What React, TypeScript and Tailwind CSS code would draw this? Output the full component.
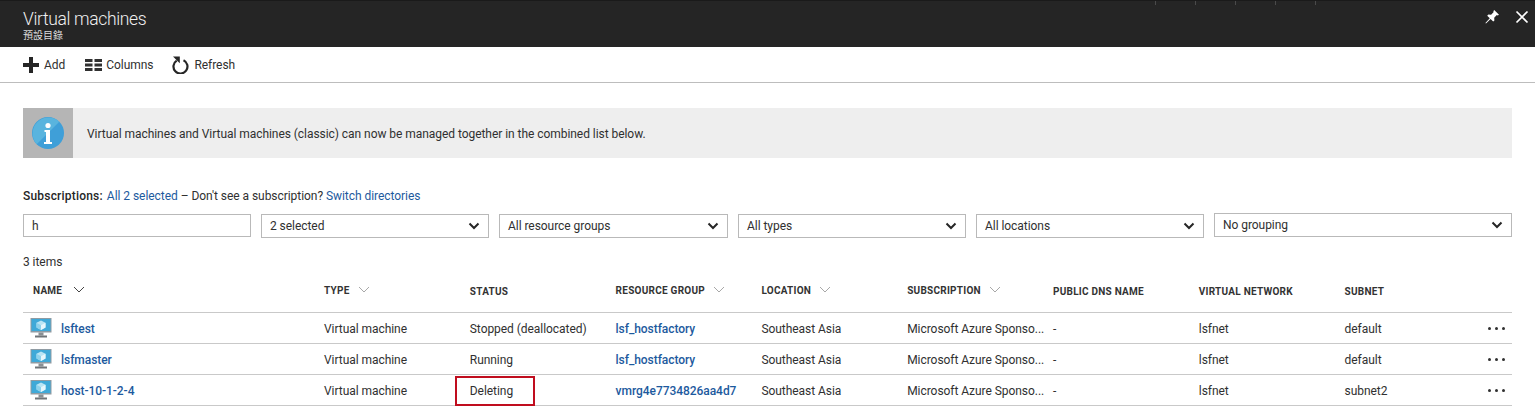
import React from 'react'

const GRID = 'grid grid-cols-[291px_repeat(7,145.8px)_1fr]'

type Vm = {
  name: string
  status: string
  group: string
  subnet: string
  marked?: boolean
}

const vms: Vm[] = [
  { name: 'lsftest', status: 'Stopped (deallocated)', group: 'lsf_hostfactory', subnet: 'default' },
  { name: 'lsfmaster', status: 'Running', group: 'lsf_hostfactory', subnet: 'default' },
  { name: 'host-10-1-2-4', status: 'Deleting', group: 'vmrg4e7734826aa4d7', subnet: 'subnet2', marked: true },
]

const columns: { label: string; sort?: 'dark' | 'light'; lower?: boolean }[] = [
  { label: 'NAME', sort: 'dark' },
  { label: 'TYPE', sort: 'light' },
  { label: 'STATUS', lower: true },
  { label: 'RESOURCE GROUP', sort: 'light' },
  { label: 'LOCATION', sort: 'light' },
  { label: 'SUBSCRIPTION', sort: 'light' },
  { label: 'PUBLIC DNS NAME', lower: true },
  { label: 'VIRTUAL NETWORK', lower: true },
  { label: 'SUBNET', lower: true },
]

function VmIcon() {
  return (
    <svg width="22" height="20" viewBox="0 0 22 20" className="-mt-[2px] shrink-0">
      <rect x="0.5" y="0" width="21" height="14.5" fill="#8f9ba3" />
      <rect x="1.5" y="1" width="19" height="12" fill="#3fa9d8" />
      <path d="M11 2.5l4.5 2.2v4.8L11 12 6.5 9.5V4.7z" fill="#b9e4f4" />
      <path d="M11 7.2l4.5-2.5v4.8L11 12z" fill="#e6f6fc" />
      <path d="M6.5 4.7L11 7.2V12L6.5 9.5z" fill="#8ed2ec" />
      <rect x="8.5" y="14.5" width="5" height="3" fill="#8a8f93" />
      <rect x="5" y="17.5" width="12" height="2" fill="#6f7478" />
    </svg>
  )
}

function Select({ label, className }: { label: string; className: string }) {
  return (
    <div className={`flex h-[24px] items-center justify-between border border-[#b9b9b9] pl-[8px] pr-[8px] ${className}`}>
      <span>{label}</span>
      <svg width="12" height="8" viewBox="0 0 12 8">
        <path d="M1.5 1.5L6 6l4.5-4.5" fill="none" stroke="#262626" strokeWidth="2" />
      </svg>
    </div>
  )
}

function SortCaret({ tone }: { tone: 'dark' | 'light' }) {
  return (
    <svg
      width="12"
      height="7"
      viewBox="0 0 12 7"
      className={`mb-[3px] inline-block ${tone === 'dark' ? 'ml-[11px]' : 'ml-[8px]'}`}
    >
      <path d="M1 1l5 5 5-5" fill="none" stroke={tone === 'dark' ? '#444444' : '#a8a8a8'} strokeWidth="1" />
    </svg>
  )
}

export default function App() {
  return (
    <div className="relative h-[417px] w-[1535px] overflow-hidden bg-white font-['Roboto','Noto_Sans_CJK_TC',sans-serif] text-[12px] leading-none tracking-[-0.05px] text-[#303030]">
      {/* blade header */}
      <div className="relative flex h-[47px] items-start justify-between border-t border-[#1a1a1a] bg-[#252525] pl-[23px] pr-[6px] text-white">
        <div>
          <div className="mt-[8px] text-[17.5px] leading-[20px] font-light tracking-[-0.35px] text-[#f0f0f0]">Virtual machines</div>
          <div className="mt-[1px] text-[10px] leading-[11px] tracking-normal text-[#dddddd]">預設目錄</div>
        </div>
        <div className="mt-[8px] flex items-center gap-[15px]">
          <svg width="16" height="16" viewBox="0 0 16 16">
            <path d="M10.2 1l4.8 4.8-1.3.7-.9-.4-2.6 2.6.2 2.7-1.2 1.2-2.6-2.6L2 14.5l-.6-.5 4.4-4.7-2.6-2.6 1.2-1.2 2.7.2 2.6-2.6-.4-.9z" fill="#ffffff" />
          </svg>
          <svg width="14" height="14" viewBox="0 0 14 14">
            <path d="M1.5 1.5l11 11M12.5 1.5l-11 11" stroke="#ffffff" strokeWidth="1.7" />
          </svg>
        </div>
        {/* faint separators left over at the top edge */}
        <div className="absolute top-0 left-[1155px] flex gap-[39px]">
          <i className="h-[4px] w-px bg-[#4a4a4a]" />
          <i className="h-[4px] w-px bg-[#4a4a4a]" />
          <i className="h-[4px] w-px bg-[#4a4a4a]" />
          <i className="h-[4px] w-px bg-[#4a4a4a]" />
          <i className="h-[4px] w-px bg-[#4a4a4a]" />
        </div>
      </div>

      {/* toolbar */}
      <div className="flex h-[36px] items-center border-b border-[#bdbdbd] pl-[23px]">
        <button className="flex items-center">
          <svg width="16" height="16" viewBox="0 0 16 16">
            <path d="M6 0h4v6h6v4h-6v6H6v-6H0V6h6z" fill="#262626" />
          </svg>
          <span className="ml-[5px]">Add</span>
        </button>
        <button className="ml-[20px] flex items-center">
          <svg width="17" height="12" viewBox="0 0 17 12">
            <path d="M0 0h7.5v3H0zM9.5 0H17v3H9.5zM0 4.5h7.5v3H0zM9.5 4.5H17v3H9.5zM0 9h7.5v3H0zM9.5 9H17v3H9.5z" fill="#303030" />
          </svg>
          <span className="ml-[4px]">Columns</span>
        </button>
        <button className="ml-[19px] flex items-center">
          <svg width="17" height="18" viewBox="0 0 17 18">
            <path d="M4.7 4.6A7 7 0 1 0 11.5 4.2" fill="none" stroke="#262626" strokeWidth="2.2" />
            <path d="M1 .5h6.8v6.8L5.2 4.8z" fill="#262626" />
          </svg>
          <span className="ml-[5px]">Refresh</span>
        </button>
      </div>

      <div className="px-[23px]">
        {/* info banner */}
        <div className="mt-[25px] flex h-[50px] items-center bg-[#eeeeee]">
          <div className="flex h-full w-[50px] items-center justify-center bg-[#b5b5b5]">
            <svg width="32" height="32" viewBox="0 0 32 32">
              <circle cx="16" cy="16" r="16" fill="#3f9fd8" />
              <path d="M27.3 4.7A16 16 0 0 0 4.7 27.3z" fill="#59b4de" />
              <circle cx="16" cy="8.5" r="2.6" fill="#ffffff" />
              <path d="M12.5 13h5.5v12h2v2h-8v-2h2V15h-1.5z" fill="#ffffff" />
            </svg>
          </div>
          <span className="ml-[14px] pt-px">Virtual machines and Virtual machines (classic) can now be managed together in the combined list below.</span>
        </div>

        {/* subscriptions */}
        <div className="mt-[32px] h-[12px]">
          <span className="font-medium tracking-[0.2px] text-[#262626]">Subscriptions:</span>
          <a className="ml-[4px] text-[#1d5a9e]">All 2 selected</a>
          <span> – Don't see a subscription? </span>
          <a className="text-[#1d5a9e]">Switch directories</a>
        </div>

        {/* filters */}
        <div className="mt-[12px] flex gap-[10px]">
          <div className="flex h-[23px] w-[228px] items-center border border-[#b9b9b9] pl-[8px]">h</div>
          <Select label="2 selected" className="w-[228px]" />
          <Select label="All resource groups" className="w-[229px]" />
          <Select label="All types" className="w-[228px]" />
          <Select label="All locations" className="w-[228px]" />
          <Select label="No grouping" className="-mt-px w-[298px]" />
        </div>

        <div className="mt-[18px]">3 items</div>

        {/* list */}
        <div className={`${GRID} mt-[9px] h-[36px] border-b border-[#c9c9c9] text-[10px] font-bold tracking-[0.25px] text-[#333333]`}>
          {columns.map((col) => (
            <div key={col.label} className={`pl-[10px] ${col.lower ? 'pt-[10px]' : 'pt-[9px]'}`}>
              {col.label}
              {col.sort && <SortCaret tone={col.sort} />}
            </div>
          ))}
        </div>
        {vms.map((vm) => (
          <div key={vm.name} className={`${GRID} h-[31px] items-center border-b border-[#c9c9c9] pt-[2px]`}>
            <div className="flex items-center pl-[7px]">
              <VmIcon />
              <a className="ml-[9px] font-medium text-[#1d5a9e]">{vm.name}</a>
            </div>
            <div className="pl-[10px]">Virtual machine</div>
            <div className="relative pl-[10px]">
              {vm.status}
              {vm.marked && <div className="absolute -top-[9px] left-[-5px] h-[30px] w-[80px] border-2 border-[#c00d1e]" />}
            </div>
            <a className="pl-[10px] font-medium text-[#1d5a9e]">{vm.group}</a>
            <div className="pl-[10px]">Southeast Asia</div>
            <div className="whitespace-nowrap pl-[10px]">Microsoft Azure Sponso...</div>
            <div className="pl-[10px]">-</div>
            <div className="pl-[10px]">lsfnet</div>
            <div className="flex items-center justify-between pl-[10px] pr-[7px]">
              <span>{vm.subnet}</span>
              <span className="mb-[1px] flex gap-[4px]">
                <i className="h-[3px] w-[3px] rounded-full bg-[#303030]" />
                <i className="h-[3px] w-[3px] rounded-full bg-[#303030]" />
                <i className="h-[3px] w-[3px] rounded-full bg-[#303030]" />
              </span>
            </div>
          </div>
        ))}
      </div>
    </div>
  )
}
